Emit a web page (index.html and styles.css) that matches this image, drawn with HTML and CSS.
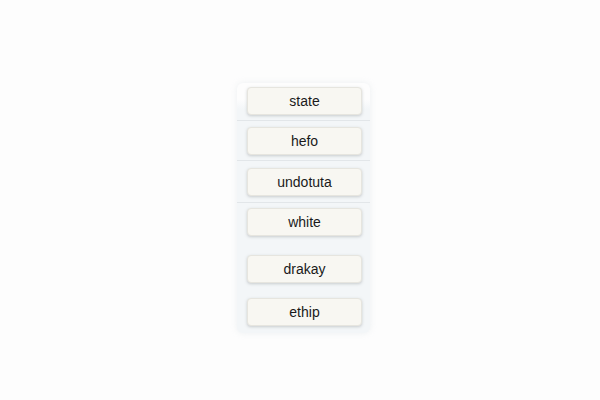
FILE: index.html
```html
<!DOCTYPE html>
<html lang="en">
<head>
    <meta charset="UTF-8">
    <title>Options</title>
    <link rel="stylesheet" href="styles.css">
</head>
<body>
    <div class="page">
        <div class="panel">
            <div class="row first"><button class="opt">state</button></div>
            <div class="row r2"><button class="opt">hefo</button></div>
            <div class="row r3"><button class="opt">undotuta</button></div>
            <div class="row plain r4"><button class="opt">white</button></div>
            <div class="row plain r5"><button class="opt">drakay</button></div>
            <div class="row plain r6"><button class="opt">ethip</button></div>
        </div>
    </div>
</body>
</html>
```

FILE: styles.css
```css
body {
    margin: 0;
    background-color: #fdfdfd;
    font-family: "Liberation Sans", Arial, sans-serif;
}
.page {
    height: 400px;
    display: flex;
    justify-content: center;
    padding-top: 83px;
    box-sizing: border-box;
}
.panel {
    width: 133px;
    margin-left: 7px;
    background-color: #f3f6f8;
    border-radius: 6px;
    box-shadow: 0 0 6px rgba(200, 210, 215, 0.3);
    display: flex;
    flex-direction: column;
    align-self: flex-start;
}
.row {
    display: flex;
    box-sizing: border-box;
    padding-left: 10px;
    align-items: center;
    border-bottom: 1px solid #e2e6e9;
}
.row.first {
    height: 38px;
    align-items: flex-start;
    padding-top: 4px;
    background: linear-gradient(#fdfdfd 0, #fdfdfd 16px, #f3f6f8 26px);
    border-radius: 6px 6px 0 0;
}
.r2 {
    height: 40px;
}
.r3 {
    height: 42px;
}
/* lower rows have no divider */
.row.plain {
    border-bottom: none;
    align-items: flex-start;
}
.r4 {
    height: 42px;
    padding-top: 5px;
}
.r5 {
    height: 45px;
    padding-top: 10px;
}
.r6 {
    height: 43px;
    padding-top: 8px;
}
.opt {
    width: 115px;
    height: 28px;
    border: 1px solid #e6e5df;
    border-radius: 4px;
    background-color: #f8f7f2;
    box-shadow: 0 1px 3px rgba(120, 125, 130, 0.35);
    font-family: "Liberation Sans", Arial, sans-serif;
    font-size: 14px;
    color: #1a1a1a;
    cursor: pointer;
}
```
